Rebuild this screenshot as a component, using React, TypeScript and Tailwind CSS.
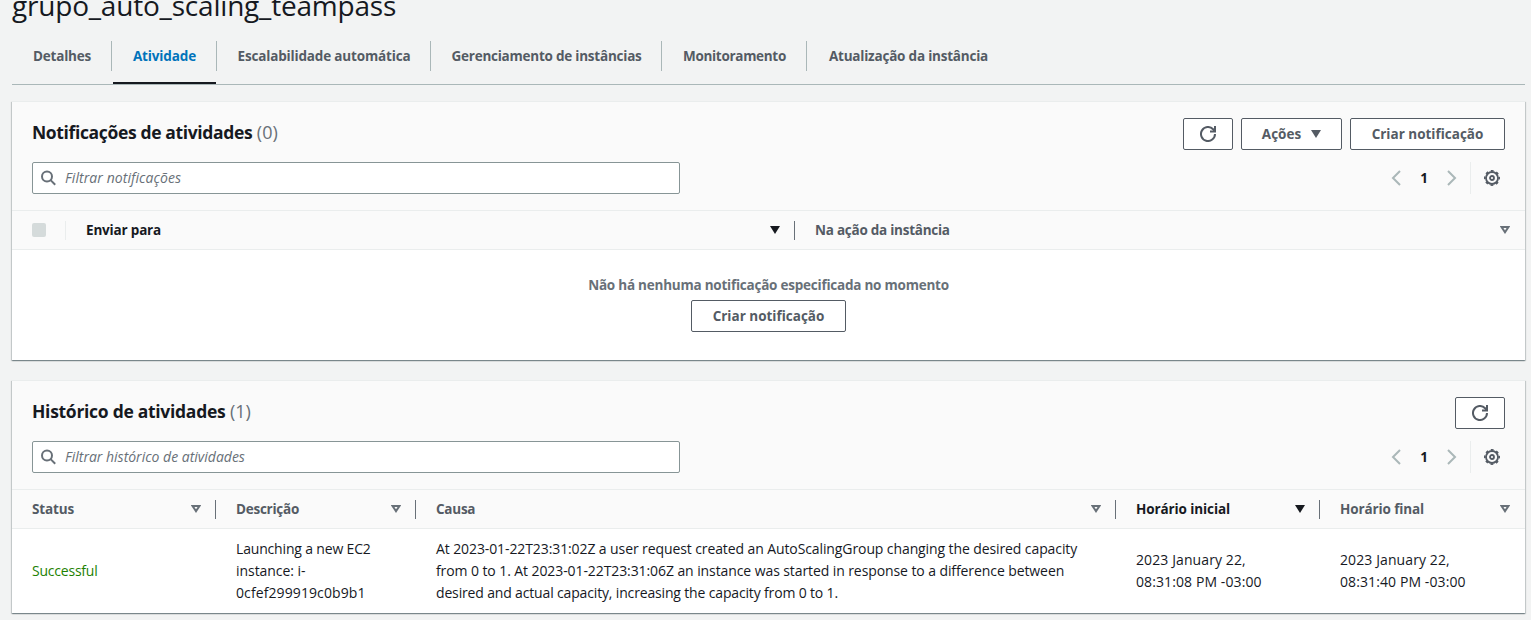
import type { ReactNode } from 'react';

function Tri({ filled = false, className = '' }: { filled?: boolean; className?: string }) {
  return (
    <svg width="10" height="8" viewBox="0 0 10 8" className={`shrink-0 ${className}`}>
      {filled ? (
        <path d="M0 0h10L5 8z" fill="currentColor" />
      ) : (
        <path d="M1.6 1h6.8L5 6.2z" fill="none" stroke="currentColor" strokeWidth="2" />
      )}
    </svg>
  );
}

function RefreshIcon() {
  return (
    <svg width="16" height="16" viewBox="0 0 16 16" fill="none" stroke="currentColor" strokeWidth="2">
      <path d="M15 8a7 7 0 1 1-1.9-4.800L14.600 5" />
      <path d="M10 5.500h5V0" />
    </svg>
  );
}

function GearIcon() {
  return (
    <svg width="16" height="16" viewBox="0 0 16 16" fill="none" stroke="currentColor">
      <circle cx="8" cy="8" r="6" strokeWidth="1.800" />
      <circle cx="8" cy="8" r="7.200" strokeWidth="1.600" strokeDasharray="2.827 2.827" strokeDashoffset="1.414" />
      <circle cx="8" cy="8" r="2" strokeWidth="1.800" />
    </svg>
  );
}

function Button({ children, className = '' }: { children: ReactNode; className?: string }) {
  return (
    <button
      className={`flex h-8 items-center justify-center rounded-[2px] border border-[#545b64] bg-white text-[13.5px] font-bold text-[#545b64] ${className}`}
    >
      {children}
    </button>
  );
}

function Search({ text, className }: { text: string; className: string }) {
  return (
    <div className="flex h-8 w-[648px] items-center rounded-[2px] border border-[#879596] bg-white pl-2 text-[#687078]">
      <svg width="16" height="16" viewBox="0 0 16 16" fill="none" stroke="currentColor" strokeWidth="2">
        <circle cx="6" cy="6.500" r="5" />
        <path d="m9.600 10.100 4.600 4.600" />
      </svg>
      <span className={`ml-2 text-[14px] italic leading-5 ${className}`}>{text}</span>
    </div>
  );
}

function Pager() {
  return (
    <div className="flex h-8 items-center text-[#545b64]">
      <svg width="10" height="16" viewBox="0 0 10 16" fill="none" stroke="#aab7b8" strokeWidth="2">
        <path d="M9 1 2 8l7 7" />
      </svg>
      <span className="w-[46px] text-center text-[13.5px] font-bold text-[#16191f]">1</span>
      <svg width="10" height="16" viewBox="0 0 10 16" fill="none" stroke="#aab7b8" strokeWidth="2">
        <path d="m1 1 7 7-7 7" />
      </svg>
      <div className="mx-[13px] h-8 w-px bg-[#eaeded]" />
      <div className="pr-[5px]">
        <GearIcon />
      </div>
    </div>
  );
}

function Panel({
  title,
  titleClass,
  count,
  actions,
  search,
  children,
}: {
  title: string;
  titleClass: string;
  count: string;
  actions: ReactNode;
  search: ReactNode;
  children: ReactNode;
}) {
  return (
    <section className="border-t border-[#eaeded] bg-white shadow-[0_1px_1px_0_rgba(0,28,36,0.3),1px_1px_1px_0_rgba(0,28,36,0.15),-1px_1px_1px_0_rgba(0,28,36,0.15)]">
      <header className="flex h-[109px] flex-col gap-3 border-b border-[#eaeded] bg-[#fafafa] px-5 pt-4">
        <div className="flex h-8 items-start justify-between">
          <h2 className="text-[17.5px] leading-[28px] text-[#16191f]">
            <span className={`font-bold ${titleClass}`}>{title}</span>{' '}
            <span className="text-[18px] text-[#687078]">({count})</span>
          </h2>
          <div className="flex gap-2">{actions}</div>
        </div>
        <div className="flex items-center justify-between">
          {search}
          <Pager />
        </div>
      </header>
      {children}
    </section>
  );
}

function Head({
  label,
  width,
  active = false,
  last = false,
  className = '',
}: {
  label: string;
  width: string;
  active?: boolean;
  last?: boolean;
  className?: string;
}) {
  return (
    <div
      className={`flex h-[38px] items-center justify-between pl-5 text-[13.5px] font-bold ${last ? 'pr-[15px]' : ''} ${
        active ? 'text-[#16191f]' : 'text-[#545b64]'
      } ${width}`}
    >
      <span className={className}>{label}</span>
      <div className="flex items-center gap-[14px]">
        <Tri filled={active} className={active ? '' : 'text-[#687078]'} />
        {!last && <div className="h-[19px] w-px bg-[#687078]" />}
      </div>
    </div>
  );
}

const tabs = [
  { label: 'Detalhes', cls: 'w-[100px] tracking-[-0.2px]' },
  { label: 'Atividade', cls: 'w-[105px] tracking-[-0.12px]', active: true },
  { label: 'Escalabilidade automática', cls: 'w-[214px] tracking-[-0.16px]' },
  { label: 'Gerenciamento de instâncias', cls: 'w-[231px] tracking-[-0.23px]' },
  { label: 'Monitoramento', cls: 'w-[145px] tracking-[-0.3px]' },
  { label: 'Atualização da instância', cls: 'w-[202px] tracking-[-0.21px]', last: true },
];

export default function App() {
  return (
    <div className="h-[620px] overflow-hidden bg-[#f2f3f3] pl-3 pr-1.5 font-['Open_Sans','Noto_Sans',sans-serif] text-[#16191f]">
      <h1 className="-mt-[15px] h-[43px] text-[28px] leading-10 tracking-[-0.2px]">grupo_auto_scaling_teampass</h1>
      <nav className="flex h-[57px] border-b border-[#aab7b8]">
        {tabs.map((t) => (
          <div key={t.label} className={`flex flex-col text-[13.5px] font-bold ${t.cls}`}>
            <div
              className={`mt-[13px] flex h-[30px] items-center justify-center pl-px leading-5 ${
                t.last ? '' : 'border-r border-[#aab7b8]'
              } ${t.active ? 'text-[#0073bb]' : 'text-[#545b64]'}`}
            >
              {t.label}
            </div>
            {t.active && <div className="ml-px mt-[11px] h-[2px] w-[103px] bg-[#16191f]" />}
          </div>
        ))}
      </nav>

      <main className="mt-4 flex flex-col gap-5">
        <Panel
          title="Notificações de atividades"
          titleClass="tracking-[-0.36px]"
          count="0"
          search={<Search text="Filtrar notificações" className="tracking-[0.08px]" />}
          actions={
            <>
              <Button className="w-[50px]">
                <RefreshIcon />
              </Button>
              <Button className="w-[101px] gap-[10px]">
                Ações <Tri filled />
              </Button>
              <Button className="w-[155px]">Criar notificação</Button>
            </>
          }
        >
          <div className="flex h-[39px] items-center border-b border-[#eaeded] bg-[#fafafa]">
            <div className="flex w-[54px] items-center justify-between pl-5">
              <div className="size-[14px] rounded-[2px] bg-[#d5dbdb]" />
              <div className="h-[19px] w-px bg-[#eaeded]" />
            </div>
            <Head label="Enviar para" width="w-[729px]" active className="tracking-[-0.18px]" />
            <Head label="Na ação da instância" width="flex-1" last className="tracking-[-0.25px]" />
          </div>
          <div className="flex h-[110px] flex-col items-center pt-[25px]">
            <p className="h-[25px] text-[13.5px] font-bold leading-5 tracking-[-0.23px] text-[#687078]">
              Não há nenhuma notificação especificada no momento
            </p>
            <Button className="w-[155px]">Criar notificação</Button>
          </div>
        </Panel>

        <Panel
          title="Histórico de atividades"
          titleClass="tracking-[-0.29px]"
          count="1"
          search={<Search text="Filtrar histórico de atividades" className="" />}
          actions={
            <Button className="w-[50px]">
              <RefreshIcon />
            </Button>
          }
        >
          <div className="flex h-[39px] border-b border-[#eaeded] bg-[#fafafa]">
            <Head label="Status" width="w-[204px]" className="tracking-[-0.15px]" />
            <Head label="Descrição" width="w-[200px]" className="tracking-[-0.25px]" />
            <Head label="Causa" width="w-[700px]" className="tracking-[-0.25px]" />
            <Head label="Horário inicial" width="w-[204px]" active className="tracking-[-0.1px]" />
            <Head label="Horário final" width="flex-1" last className="tracking-[-0.12px]" />
          </div>
          <div className="flex h-[84px] items-center whitespace-nowrap text-[14px] leading-[22px]">
            <div className="w-[204px] pl-5 tracking-[-0.22px] text-[#1d8102]">Successful</div>
            <div className="w-[200px] pl-5">
              <p className="tracking-[-0.17px]">Launching a new EC2</p>
              <p className="tracking-[-0.05px]">instance: i-</p>
              <p className="tracking-[0.1px]">0cfef299919c0b9b1</p>
            </div>
            <div className="w-[700px] pl-5">
              <p className="tracking-[-0.1px]">
                At 2023-01-22T23:31:02Z a user request created an AutoScalingGroup changing the desired capacity
              </p>
              <p className="tracking-[-0.09px]">
                from 0 to 1. At 2023-01-22T23:31:06Z an instance was started in response to a difference between
              </p>
              <p className="tracking-[-0.157px]">desired and actual capacity, increasing the capacity from 0 to 1.</p>
            </div>
            <div className="w-[204px] pl-5 tracking-[0.1px]">
              <p>2023 January 22,</p>
              <p>08:31:08 PM -03:00</p>
            </div>
            <div className="flex-1 pl-5 tracking-[0.1px]">
              <p>2023 January 22,</p>
              <p>08:31:40 PM -03:00</p>
            </div>
          </div>
        </Panel>
      </main>
    </div>
  );
}
